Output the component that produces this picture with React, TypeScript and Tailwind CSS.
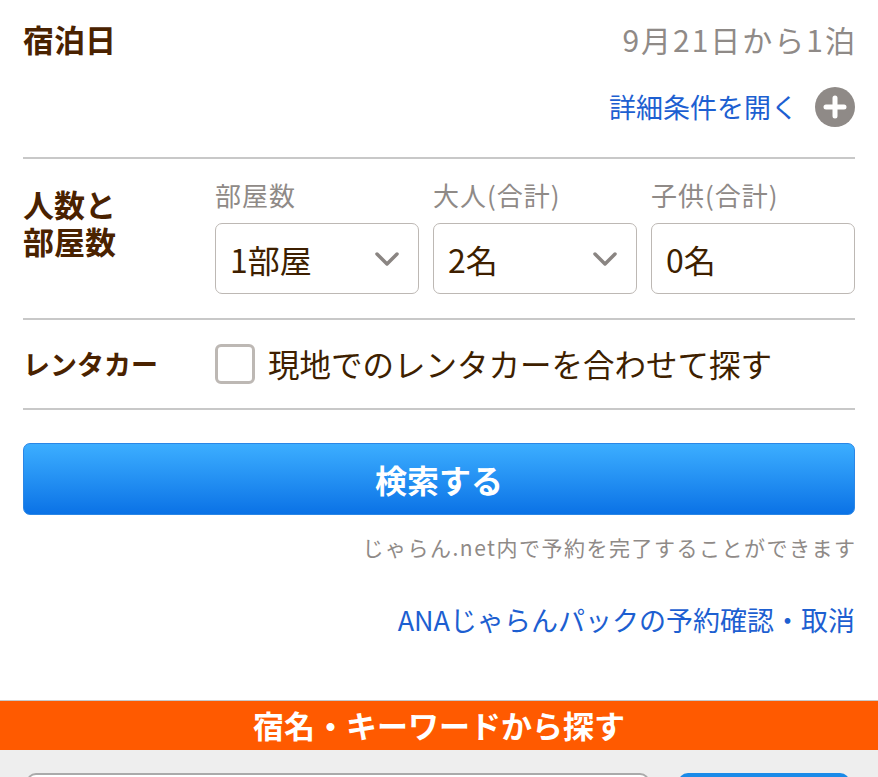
import React from "react";

function Chevron() {
    return (
        <svg width="26" height="16" viewBox="0 0 26 16" className="shrink-0">
            <path d="M3 3 L13 13 L23 3" fill="none" stroke="#8a8582" strokeWidth="3.5" strokeLinecap="round" strokeLinejoin="round" />
        </svg>
    );
}

function PlusCircle() {
    return (
        <span className="w-[40px] h-[40px] rounded-full bg-[#8f8a87] flex items-center justify-center">
            <svg width="24" height="24" viewBox="0 0 24 24">
                <path d="M12 3 V21 M3 12 H21" stroke="#ffffff" strokeWidth="5" strokeLinecap="round" />
            </svg>
        </span>
    );
}

function Field({ label, value, select }: { label: string; value: string; select?: boolean }) {
    return (
        <div className="flex flex-col">
            <p className="text-[26px] leading-[32px] tracking-[1px] text-[#8f8a87] mb-[12px] whitespace-nowrap">{label}</p>
            <div className="h-[71px] border border-[#bdb8b4] rounded-[7px] flex items-center justify-between pl-[14px] pr-[18px] bg-white">
                <span className="text-[32px] text-[#3e1f00]">{value}</span>
                {select && <Chevron />}
            </div>
        </div>
    );
}

export default function App() {
    return (
        <div className="w-[878px] bg-white font-['Noto_Sans_CJK_JP',sans-serif]">

            <div className="px-[23px]">

                <div className="h-[157px] flex flex-col">
                    <div className="h-[78px] flex items-center justify-between">
                        <h2 className="text-[31px] font-bold text-[#4a2200]">宿泊日</h2>
                        <p className="text-[30px] tracking-[2px] text-[#8f8a87] -mr-[2px]">9月21日から1泊</p>
                    </div>
                    <div className="h-[58px] flex items-center justify-end gap-[17px]">
                        <span className="text-[27px] text-[#1d5fd1]">詳細条件を開く</span>
                        <PlusCircle />
                    </div>
                </div>

                <div className="h-[2px] bg-[#c8c8c8]" />

                <div className="flex h-[159px]">
                    <h2 className="w-[192px] pt-[26px] text-[31px] leading-[37px] font-bold text-[#4a2200]">
                        <span className="block">人数と</span>
                        <span className="block">部屋数</span>
                    </h2>
                    <div className="flex-1 grid grid-cols-3 gap-[14px] pt-[20px]">
                        <Field label="部屋数" value="1部屋" select />
                        <Field label="大人(合計)" value="2名" select />
                        <Field label="子供(合計)" value="0名" />
                    </div>
                </div>

                <div className="h-[2px] bg-[#c8c8c8]" />

                <div className="h-[88px] flex items-center">
                    <h2 className="w-[192px] text-[27px] font-bold text-[#4a2200]">レンタカー</h2>
                    <span className="w-[40px] h-[40px] border-[3px] border-[#bdb8b4] rounded-[6px] bg-white" />
                    <span className="ml-[13px] text-[31.5px] text-[#3e1f00]">現地でのレンタカーを合わせて探す</span>
                </div>

                <div className="h-[2px] bg-[#c8c8c8]" />

                <button className="mt-[33px] w-full h-[72px] rounded-[7px] border border-[#2a86e6] bg-gradient-to-b from-[#3caeff] to-[#0a72e6] text-white text-[32px] font-bold">
                    検索する
                </button>

                <p className="mt-[18px] text-right text-[21px] leading-[28px] tracking-[1.5px] -mr-[1.5px] text-[#8f8a87]">
                    じゃらん.net内で予約を完了することができます
                </p>

                <p className="mt-[42px] text-right text-[27px] leading-[34px] text-[#1d5fd1]">
                    ANAじゃらんパックの予約確認・取消
                </p>

            </div>

            <div className="mt-[63px] h-px bg-[#c8c8c8]" />

            <div className="h-[49px] bg-[#ff5a00] flex items-center justify-center">
                <h2 className="text-[31px] font-bold text-white">宿名・キーワードから探す</h2>
            </div>

            <div className="bg-[#eeeeee] h-[60px] flex gap-[28px] px-[26px] pt-[23px]">
                <div className="w-[624px] h-[50px] bg-white border-2 border-[#aaaaaa] rounded-[10px]" />
                <div className="w-[172px] h-[50px] bg-[#1a8ae8] rounded-[10px]" />
            </div>

        </div>
    );
}
